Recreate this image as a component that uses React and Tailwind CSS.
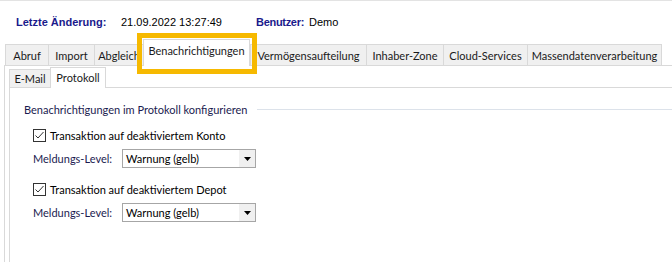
import React from "react";

const outerTabs = [
  { label: "Abruf", w: "w-[43px]" },
  { label: "Import", w: "w-[46px]" },
  { label: "Abgleich", w: "w-[49px]" },
  { label: "Benachrichtigungen", w: "w-[107px]", active: true },
  { label: "Vermögensaufteilung", w: "w-[116px]" },
  { label: "Inhaber-Zone", w: "w-[77px]" },
  { label: "Cloud-Services", w: "w-[84px]" },
  { label: "Massendatenverarbeitung", w: "w-[135px]" },
];

function Tab({ label, w, active }) {
  if (active) {
    return (
      <div className={`${w} h-[27px] -mb-px bg-white border border-b-0 border-[#d9d9d9] flex items-start justify-center pt-[5px] relative z-10 whitespace-nowrap`}>
        {label}
      </div>
    );
  }
  return (
    <div className={`${w} h-[21px] bg-[#f0f0f0] border border-r-0 border-b-0 border-[#d9d9d9] flex items-center justify-center last:border-r whitespace-nowrap`}>
      {label}
    </div>
  );
}

function Check({ label }) {
  return (
    <div className="flex items-center h-[14px] pl-[23px]">
      <span className="w-[13px] h-[13px] border border-[#333] bg-white grid place-items-center">
        <svg width="11" height="11" viewBox="0 0 11 11">
          <path d="M1.5 5.5 L4 8 L9.5 2" fill="none" stroke="#333" strokeWidth="1" />
        </svg>
      </span>
      <span className="ml-[4px] text-black whitespace-nowrap">{label}</span>
    </div>
  );
}

function Level() {
  return (
    <div className="flex items-center pl-[23px] h-[19px]">
      <span className="w-[89px] text-[#1b1b50] whitespace-nowrap">Meldungs-Level:</span>
      <div className="w-[134px] h-[19px] border border-[#a6a6a6] flex items-center pl-[3px] bg-white">
        <span className="flex-1 text-black whitespace-nowrap">Warnung (gelb)</span>
        <span className="w-[16px] h-[17px] bg-[#f0f0f0] grid place-items-center">
          <svg width="7" height="4" viewBox="0 0 7 4">
            <path d="M0 0 H7 L3.5 4 Z" fill="#000" />
          </svg>
        </span>
      </div>
    </div>
  );
}

export default function App() {
  return (
    <div className="w-[672px] h-[262px] bg-white relative overflow-hidden border-t border-[#e3e3e3] text-[11px] leading-none" style={{ fontFamily: "Lato, sans-serif" }}>
      <div className="h-[37px] flex items-start pt-[16px] pl-[16px] text-[11px]" style={{ fontFamily: "'Liberation Sans', Arial, sans-serif" }}>
        <span className="font-bold text-[#1a1a8c] w-[105px]">Letzte Änderung:</span>
        <span className="text-black w-[135px]">21.09.2022 13:27:49</span>
        <span className="font-bold text-[#1a1a8c] tracking-[-0.3px] shrink-0">Benutzer:</span>
        <span className="ml-[5px] text-black">Demo</span>
      </div>

      <div className="flex items-end h-[27px] pl-[5px] text-[#1a1a1a]">
        {outerTabs.map((t) => (
          <Tab key={t.label} {...t} />
        ))}
      </div>

      <div className="ml-[4px] border-t border-l border-[#d9d9d9] h-[200px]">
        <div className="flex items-end h-[21px] pl-[4px] text-[#1a1a1a]">
          <div className="w-[41px] h-[18px] bg-[#f0f0f0] border border-b-0 border-r-0 border-[#d9d9d9] flex items-center justify-center">E-Mail</div>
          <div className="w-[56px] h-[21px] -mb-px bg-white border border-b-0 border-[#d9d9d9] flex items-start justify-center pt-[4px] relative z-10">Protokoll</div>
        </div>
        <div className="ml-[4px] border-t border-l border-[#d9d9d9] h-[200px] pt-[14px]">
          <div className="flex items-center pl-[14px] h-[14px]">
            <span className="text-[#1b1b50] whitespace-nowrap">Benachrichtigungen im Protokoll konfigurieren</span>
            <span className="flex-1 ml-[10px] border-t border-[#dce2ea]" />
          </div>
          <div className="mt-[12px] flex flex-col">
            <Check label="Transaktion auf deaktiviertem Konto" />
            <div className="mt-[7px]"><Level /></div>
            <div className="mt-[14px]"><Check label="Transaktion auf deaktiviertem Depot" /></div>
            <div className="mt-[7px]"><Level /></div>
          </div>
        </div>
      </div>

      <div className="absolute left-[137px] top-[32px] w-[120px] h-[41px] border-[5px] border-[#f6b900] pointer-events-none z-20" />
    </div>
  );
}
